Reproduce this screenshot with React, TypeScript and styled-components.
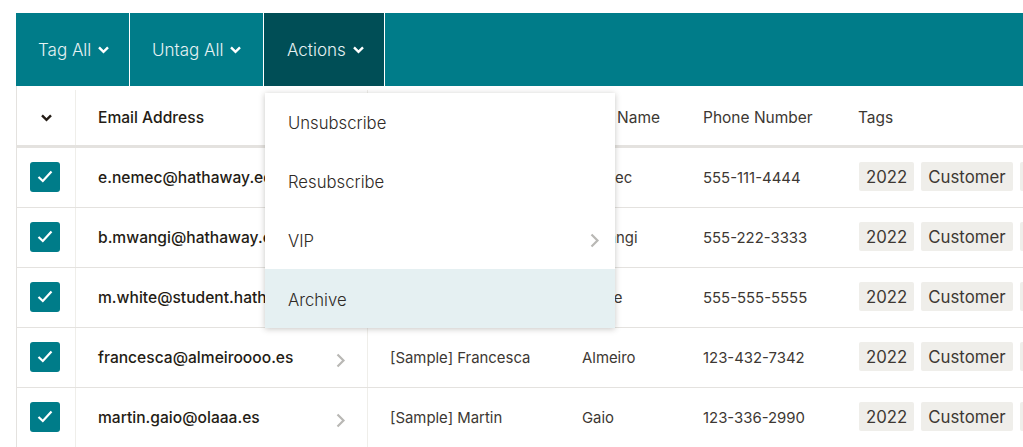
import React from 'react';
import styled, { createGlobalStyle } from 'styled-components';

const GlobalStyle = createGlobalStyle`
    html, body {
        margin: 0;
        padding: 0;
        background: #ffffff;
        overflow: hidden;
    }
    body {
        font-family: Inter, 'Liberation Sans', sans-serif;
        color: #3d3833;
    }
`;

const Page = styled.div`
    position: relative;
    width: 1023px;
    height: 447px;
    padding: 13px 0 0 16px;
    box-sizing: border-box;
    overflow: hidden;
`;

const Toolbar = styled.div`
    display: flex;
    height: 73px;
    background: #007c89;
`;

const ToolButton = styled.div<{ $width: number; $active?: boolean }>`
    display: flex;
    align-items: center;
    gap: 7px;
    width: ${(p) => p.$width}px;
    padding: 1px 0 0 ${(p) => (p.$active ? 23 : 22)}px;
    box-sizing: border-box;
    border-right: 1px solid #ffffff;
    background: ${(p) => (p.$active ? '#004e56' : 'transparent')};
    color: #e6f2f3;
    font-size: 17px;
    font-weight: 300;
`;

const Table = styled.div`
    border-left: 1px solid #e4e2df;
`;

const Row = styled.div<{ $head?: boolean }>`
    display: grid;
    grid-template-columns: 59px 292px 214px 121px 155px 1fr;
    height: ${(p) => (p.$head ? '62px' : '60px')};
    box-sizing: border-box;
    padding-top: ${(p) => (p.$head ? '4px' : '0')};
    border-bottom: ${(p) => (p.$head ? '3px solid #e4e2df' : '1px solid #e4e2df')};
    font-size: ${(p) => (p.$head ? '15.5px' : '14.9px')};
`;

const Cell = styled.div<{ $divider?: boolean; $pad?: number; $bold?: boolean }>`
    display: flex;
    align-items: center;
    justify-content: space-between;
    min-width: 0;
    padding-left: ${(p) => p.$pad ?? 0}px;
    border-right: ${(p) => (p.$divider ? '1px solid #efeeea' : 'none')};
    font-weight: ${(p) => (p.$bold ? 500 : 400)};
    font-size: ${(p) => (p.$bold ? '15.6px' : 'inherit')};
    color: ${(p) => (p.$bold ? '#241c15' : 'inherit')};
    white-space: nowrap;
    overflow: hidden;
`;

const CheckCell = styled(Cell)`
    justify-content: center;
`;

const Checkbox = styled.div`
    display: flex;
    align-items: center;
    justify-content: center;
    width: 30px;
    height: 30px;
    margin: 0 3px 2px 0;
    border-radius: 3px;
    background: #007c89;
`;

const Tags = styled.div`
    display: flex;
    gap: 7px;
    margin: 0 0 2px 1px;
`;

const Tag = styled.span`
    display: flex;
    align-items: center;
    height: 29px;
    padding: 0 7px;
    border-radius: 2px;
    background: #efeeea;
    font-size: 16.8px;
    flex-shrink: 0;
`;

const Menu = styled.div`
    position: absolute;
    left: 265px;
    top: 93px;
    width: 350px;
    background: #ffffff;
    box-shadow: 0 1px 6px rgba(36, 28, 21, 0.25);
`;

const MenuItem = styled.div<{ $hover?: boolean }>`
    display: flex;
    align-items: center;
    justify-content: space-between;
    height: 58.75px;
    padding: 2px 15px 0 23px;
    box-sizing: border-box;
    background: ${(p) => (p.$hover ? '#e5f0f2' : 'transparent')};
    font-size: 16.7px;
    font-weight: 300;
    color: #2f2a26;
`;

const Chevron = styled.svg`
    flex-shrink: 0;
`;

const Down = ({ color = '#ffffff' }: { color?: string }) => (
    <Chevron width="11" height="8" viewBox="0 0 11 8" fill="none">
        <path d="M1 1.3 L5.5 5.8 L10 1.3" stroke={color} strokeWidth="2.4" />
    </Chevron>
);

const Right = () => (
    <Chevron width="10" height="15" viewBox="0 0 10 15" fill="none">
        <path d="M1.5 1.5 L7.5 7.5 L1.5 13.5" stroke="#b9b8b5" strokeWidth="2.2" />
    </Chevron>
);

const Check = () => (
    <Chevron width="16" height="13" viewBox="0 0 16 13" fill="none">
        <path d="M1.5 7 L5.8 11 L14.5 1.5" stroke="#ffffff" strokeWidth="2.2" />
    </Chevron>
);

const ArrowSlot = styled.span`
    display: flex;
    margin: 6px 21px 0 0;
`;

const contacts = [
    { email: 'e.nemec@hathaway.edu', first: '[Sample] Elena', last: 'Nemec', phone: '555-111-4444' },
    { email: 'b.mwangi@hathaway.edu', first: '[Sample] Brian', last: 'Mwangi', phone: '555-222-3333' },
    { email: 'm.white@student.hathaway.edu', first: '[Sample] Mary', last: 'White', phone: '555-555-5555' },
    { email: 'francesca@almeiroooo.es', first: '[Sample] Francesca', last: 'Almeiro', phone: '123-432-7342' },
    { email: 'martin.gaio@olaaa.es', first: '[Sample] Martin', last: 'Gaio', phone: '123-336-2990' },
];

export default function App() {
    return (
        <Page>
            <GlobalStyle />
            <Toolbar>
                <ToolButton $width={114}>
                    Tag All <Down />
                </ToolButton>
                <ToolButton $width={134}>
                    Untag All <Down />
                </ToolButton>
                <ToolButton $width={121} $active>
                    Actions <Down />
                </ToolButton>
            </Toolbar>
            <Table>
                <Row $head>
                    <CheckCell $divider>
                        <Down color="#241c15" />
                    </CheckCell>
                    <Cell $divider $pad={22} $bold>
                        Email Address
                    </Cell>
                    <Cell $pad={22}>First Name</Cell>
                    <Cell>Last Name</Cell>
                    <Cell>Phone Number</Cell>
                    <Cell>Tags</Cell>
                </Row>
                {contacts.map((c) => (
                    <Row key={c.email}>
                        <CheckCell $divider>
                            <Checkbox>
                                <Check />
                            </Checkbox>
                        </CheckCell>
                        <Cell $divider $pad={22} $bold>
                            {c.email}
                            <ArrowSlot>
                                <Right />
                            </ArrowSlot>
                        </Cell>
                        <Cell $pad={22}>{c.first}</Cell>
                        <Cell>{c.last}</Cell>
                        <Cell>{c.phone}</Cell>
                        <Cell>
                            <Tags>
                                <Tag>2022</Tag>
                                <Tag>Customer</Tag>
                                <Tag>Influencer</Tag>
                            </Tags>
                        </Cell>
                    </Row>
                ))}
            </Table>
            <Menu>
                <MenuItem>Unsubscribe</MenuItem>
                <MenuItem>Resubscribe</MenuItem>
                <MenuItem>
                    VIP <Right />
                </MenuItem>
                <MenuItem $hover>Archive</MenuItem>
            </Menu>
        </Page>
    );
}
